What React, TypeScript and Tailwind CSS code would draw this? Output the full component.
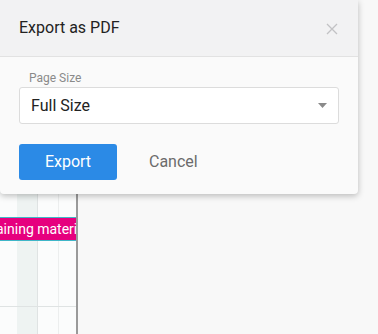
import React from "react";

export default function App() {
  return (
    <div className="relative w-[378px] h-[334px] overflow-hidden bg-[#f8f8f8]" style={{ fontFamily: "Roboto, 'Liberation Sans', sans-serif" }}>
      {/* underlying page */}
      <div className="flex h-full">
        <div className="relative w-[78px] h-full bg-[#fbfcfc] border-r-2 border-[#9a9a9a] flex">
          <div className="w-[17px] h-full" />
          <div className="w-[21px] h-full bg-[#eef3f2] border-r border-[#dfe3e3]" />
          <div className="w-[21px] h-full border-r border-[#eceeee]" />
          <div className="flex-1 h-full" />
          <div className="absolute left-0 right-0 top-[306px] h-px bg-[#dfe3e3]" />
          <div className="absolute left-0 right-0 top-[217px] h-[24px] bg-[#e6007e] border-y border-[#3fb6c8] flex items-center overflow-hidden">
            <span className="whitespace-nowrap text-white text-[14px] -ml-[4px]">aining materials</span>
          </div>
        </div>
        <div className="flex-1" />
      </div>

      {/* dialog */}
      <div className="absolute left-0 top-0 w-[358px] h-[194px] bg-[#fafafa] rounded-b-[4px] shadow-[0_2px_6px_rgba(0,0,0,0.25)] flex flex-col">
        <div className="h-[57px] shrink-0 bg-[#f2f2f3] border-b border-[#e2e2e2] flex items-center justify-between pl-[19px] pr-[20px]">
          <span className="text-[16px] text-[#222] leading-none">Export as PDF</span>
          <svg width="12" height="12" viewBox="0 0 12 12" className="mt-[2px]">
            <path d="M1 1L11 11M11 1L1 11" stroke="#c2c2c4" strokeWidth="1.3" />
          </svg>
        </div>
        <div className="px-[19px] pt-[15px]">
          <div className="text-[12px] text-[#8a8a8a] leading-none pl-[10px] mb-[3px]">Page Size</div>
          <div className="h-[37px] w-[320px] bg-white border border-[#dcdcdc] rounded-[3px] flex items-center justify-between pl-[11px] pr-[11px]">
            <span className="text-[16px] text-[#222]">Full Size</span>
            <svg width="9" height="5" viewBox="0 0 9 5">
              <path d="M0 0H9L4.5 5Z" fill="#8a8a8a" />
            </svg>
          </div>
          <div className="flex items-center mt-[20px]">
            <div className="w-[98px] h-[36px] rounded-[3px] bg-[#2b8ae6] flex items-center justify-center text-white text-[16px]">Export</div>
            <div className="ml-[32px] text-[16px] text-[#6b6b6b]">Cancel</div>
          </div>
        </div>
      </div>
    </div>
  );
}
